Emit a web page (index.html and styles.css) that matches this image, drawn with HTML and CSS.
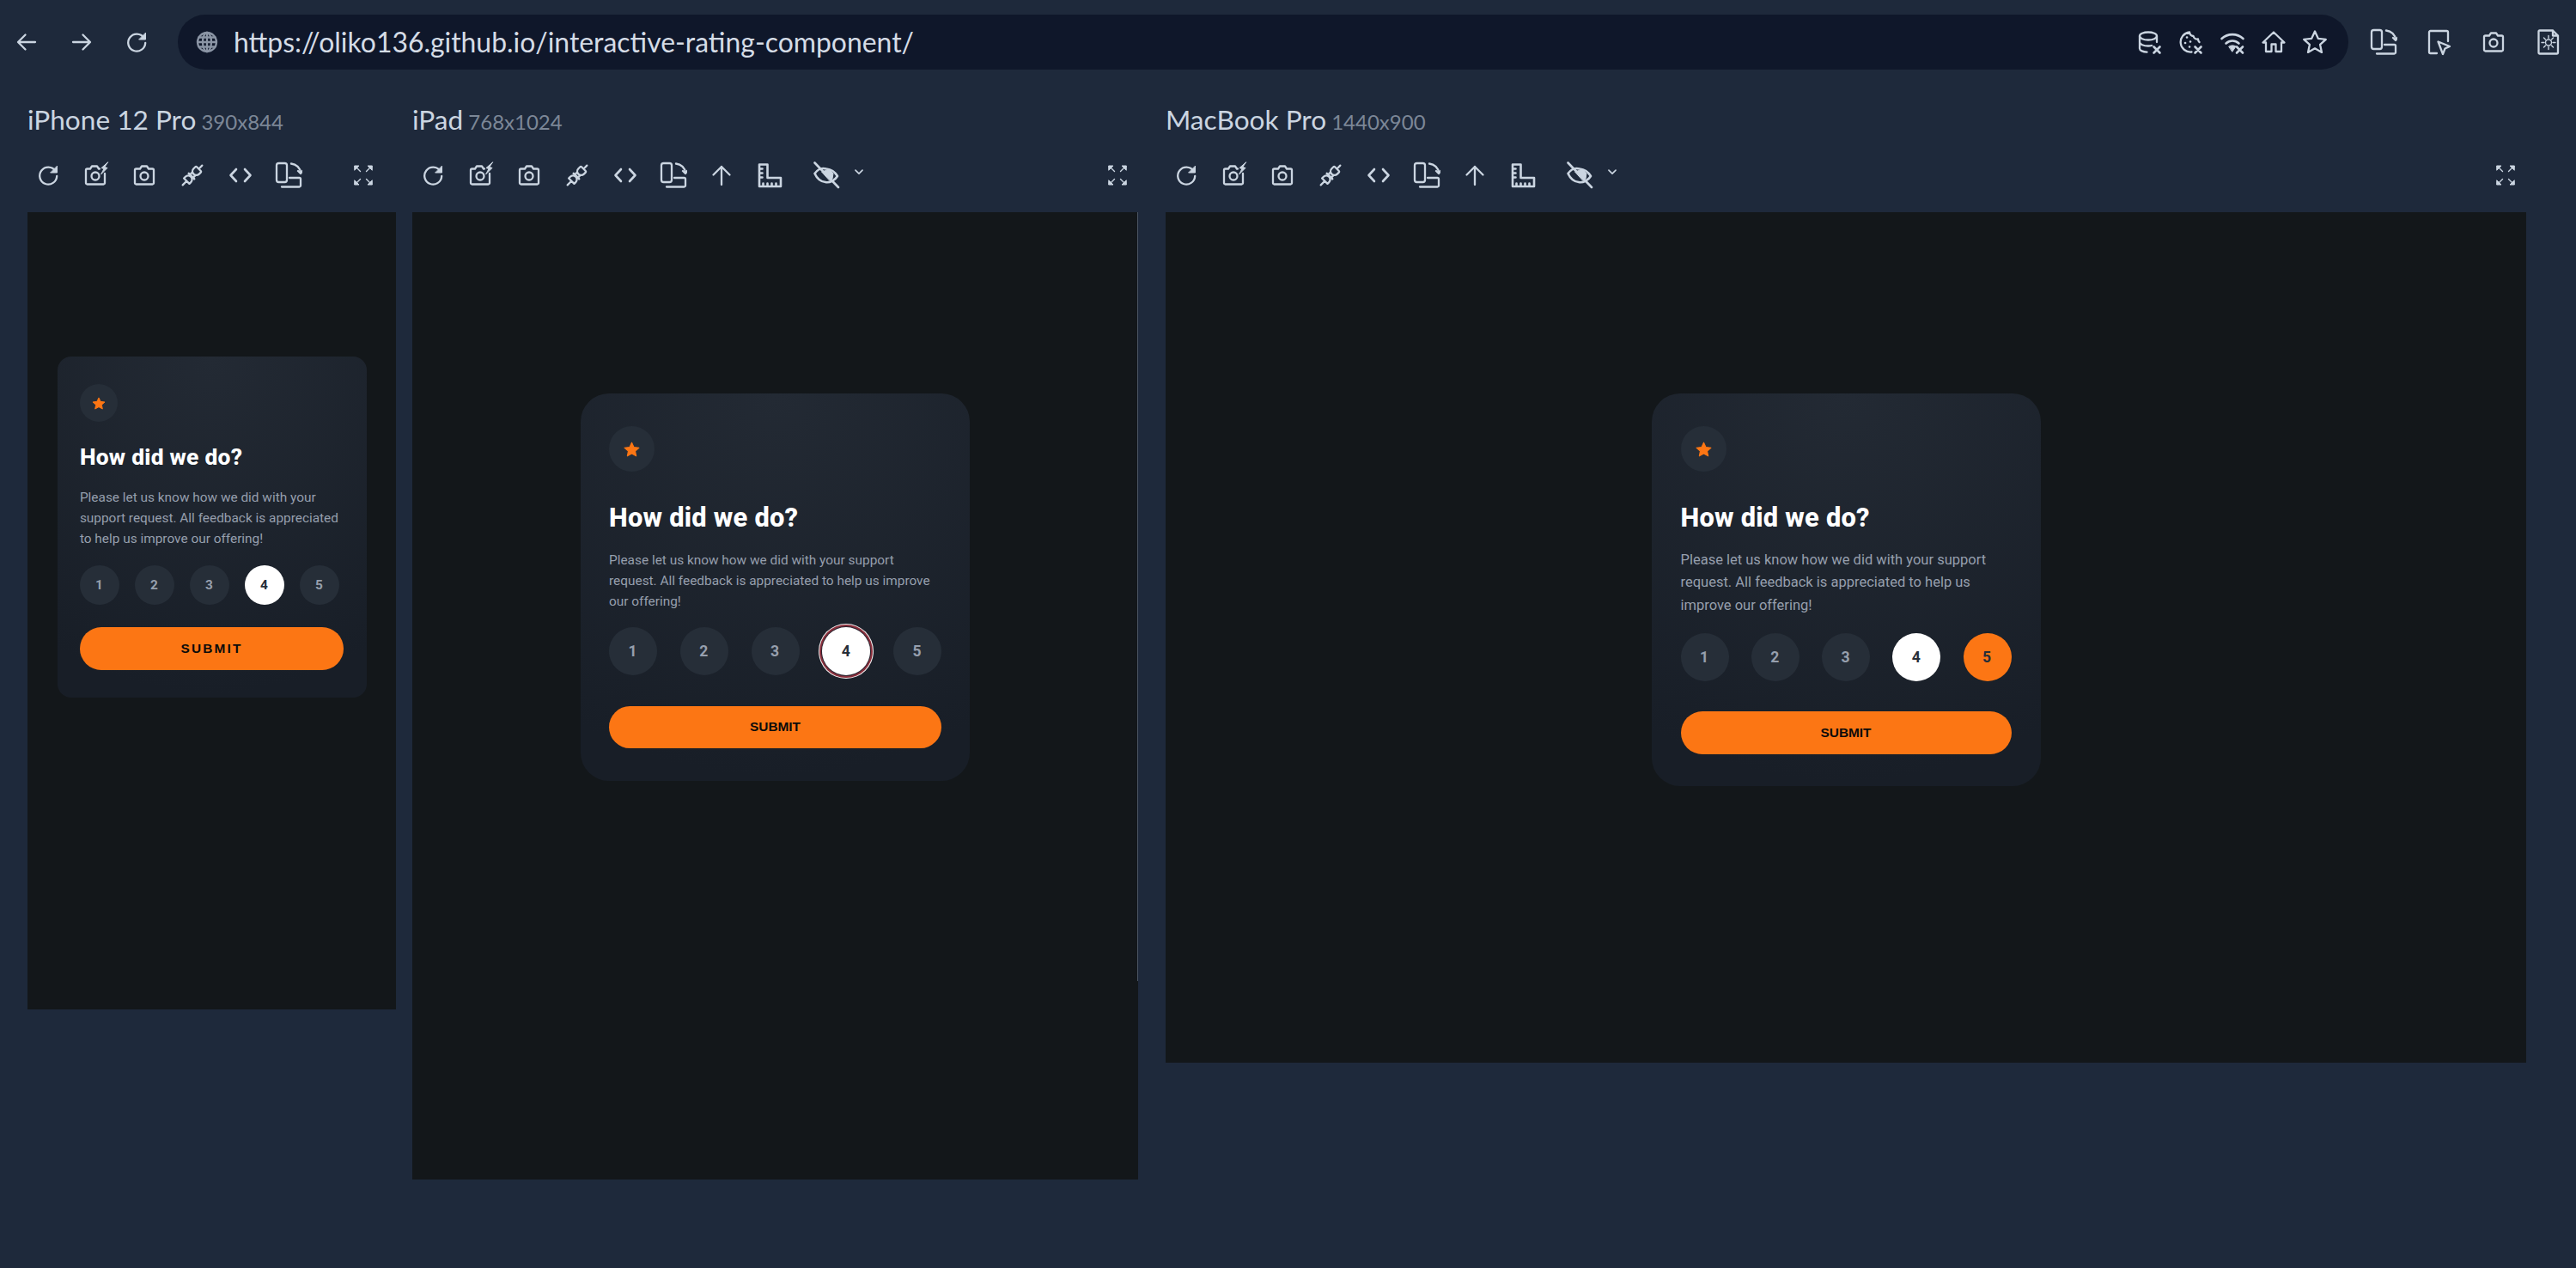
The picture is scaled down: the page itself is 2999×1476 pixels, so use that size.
FILE: index.html
```html
<!DOCTYPE html>
<html lang="en">
<head>
    <meta charset="UTF-8">
    <title>Responsively</title>
    <link rel="stylesheet" href="styles.css">
</head>
<body>
    <svg class="sprite" xmlns="http://www.w3.org/2000/svg">
        <symbol id="i-back" viewBox="0 0 32 32"><path d="M26 16H7M14.5 7.5L6 16l8.500 8.500"/></symbol>
        <symbol id="i-forward" viewBox="0 0 32 32"><path d="M6 16h19M17.500 7.500L26 16l-8.500 8.500"/></symbol>
        <symbol id="i-reload" viewBox="0 0 32 32"><path d="M24.500 11A10 10 0 1 0 26.200 17"/><path class="solid" d="M26.500 5.500v7.500H19z"/></symbol>
        <symbol id="i-globe" viewBox="0 0 32 32"><circle cx="16" cy="16" r="11"/><ellipse cx="16" cy="16" rx="5" ry="11"/><path d="M5 16h22M6.500 10.500h19M6.500 21.500h19M16 5v22"/></symbol>
        <symbol id="i-db" viewBox="0 0 32 32"><ellipse cx="14" cy="9" rx="10" ry="4.500"/><path d="M4 9v14.500c0 2.200 4 4 8.500 4.200M24 9v7M4 16c0 2.500 4.500 4.500 10 4.500 1.500 0 3-.2 4-.5"/><path class="thick" d="M20.500 21.500l7 7M27.500 21.500l-7 7"/></symbol>
        <symbol id="i-cookie" viewBox="0 0 32 32"><path d="M14 4.500A11.500 11.500 0 1 0 16.500 27.500M14 4.500c.5 2.500 2 4.500 4.500 4.500 .5 2.500 3 4 5.500 3.500 0 1.500 .8 3 1.500 3.500"/><path class="thick" d="M11 10.500h.1M9 17h.1M15 15.500h.1M14 21.500h.1M20.500 21.500l7 7M27.500 21.500l-7 7"/></symbol>
        <symbol id="i-wifi" viewBox="0 0 32 32"><path class="thick" d="M3.500 12C10.500 5.500 21.500 5.500 28.500 12M8.500 17.500c4.500-4 10.500-4 15 0"/><path class="solid" d="M12 21c2.500-1.500 5.500-1.500 8 0l-4 6z"/><path class="thick" d="M21 21.500l7 7M28 21.500l-7 7"/></symbol>
        <symbol id="i-home" viewBox="0 0 32 32"><path d="M16 4.500L3.500 16.500H7V27h6.500v-8.500h5V27H25V16.500h3.500z"/></symbol>
        <symbol id="i-star" viewBox="0 0 32 32"><path d="M16 3.500l3.800 8.300 9 1-6.700 6.100 1.900 9-8-4.600-8 4.600 1.900-9-6.700-6.100 9-1z"/></symbol>
        <symbol id="i-rotate" viewBox="0 0 32 32"><rect x="2" y="2" width="12" height="22" rx="2.500"/><path d="M8 29.500h20.500a1.500 1.500 0 0 0 1.500-1.500v-7.500a1.500 1.500 0 0 0-1.500-1.500H17M19 2.500C25 3 29.500 7.500 30 13"/><path d="M27 11l3 3 2-3"/></symbol>
        <symbol id="i-inspect" viewBox="0 0 32 32"><path d="M14 29H6.500A1.500 1.500 0 0 1 5 27.500v-23A1.500 1.500 0 0 1 6.500 3h19A1.500 1.500 0 0 1 27 4.500V15"/><path d="M15.500 15.500l13.500 5.500-5.500 2.500-2.500 6.500z"/></symbol>
        <symbol id="i-camera" viewBox="0 0 32 32"><path d="M6.500 8.500H11l2-3h6l2 3h4.500A1.500 1.500 0 0 1 27 10v15a1.500 1.500 0 0 1-1.500 1.500h-19A1.500 1.500 0 0 1 5 25V10a1.500 1.500 0 0 1 1.500-1.500z"/><circle cx="16" cy="17" r="4.500"/></symbol>
        <symbol id="i-filesun" viewBox="0 0 32 32"><path d="M5.500 2.500H21l6 6v20a1 1 0 0 1-1 1H5.500a1 1 0 0 1-1-1v-25a1 1 0 0 1 1-1zM21 2.500v6h6"/><circle class="fine" cx="16" cy="16.500" r="3.500"/><path class="fine" d="M16 8.500v3M16 21.500v3M8 16.500h3M21 16.500h3M10.500 11l2 2M19.500 20l2 2M21.500 11l-2 2M12.500 20l-2 2"/></symbol>
        <symbol id="i-shot" viewBox="0 0 32 32"><path d="M20 8.500h-1l-2-3h-6l-2 3H5.500A1.500 1.500 0 0 0 4 10v15a1.500 1.500 0 0 0 1.500 1.500h19A1.500 1.500 0 0 0 26 25V14"/><circle cx="15" cy="17" r="4.500"/><path class="solid" d="M29.500 1L22 7.500l3 1-3.500 6.500 7.500-7.500-3-1z"/></symbol>
        <symbol id="i-plug" viewBox="0 0 32 32"><g transform="rotate(45 16 16)"><path d="M16 0v5M13 5.500h6a1.500 1.500 0 0 1 1.500 1.500v2.500a4.500 4.500 0 0 1-9 0V7A1.500 1.500 0 0 1 13 5.500zM13.500 14v3.500M18.500 14v3.500M11.500 23a4.500 4.500 0 0 1 9 0v2.500h-9zM16 25.500v6.500"/><path class="thick" d="M11.500 17.500h9"/></g></symbol>
        <symbol id="i-code" viewBox="0 0 32 32"><path class="thick" d="M11 9l-6.500 7 6.500 7M21 9l6.500 7-6.500 7"/></symbol>
        <symbol id="i-up" viewBox="0 0 32 32"><path d="M16 27V6M6.500 15.500L16 6l9.500 9.500"/></symbol>
        <symbol id="i-ruler" viewBox="0 0 32 32"><path class="thick" d="M4 3.500h9.500V19H29v10H4zM4 8.500h3.500M4 13.500h3.500M4 18.500h3.500M8.500 29v-3.500M13.500 29v-3.500M18.500 29v-3.500M23.500 29v-3.500"/></symbol>
        <symbol id="i-eyeoff" viewBox="0 0 32 32"><path class="thick" d="M2.500 14C6 9 11 7 16 8.500c5 .5 10 3.500 13 8.500-3 5-9 8-14 7-5-.5-10-4.500-12.500-10z"/><path class="solid" d="M11 12l8-3 5 5-1 6-3 2z"/><path class="thick" d="M2.500 1.500L30 30"/></symbol>
        <symbol id="i-chevron" viewBox="0 0 32 32"><path class="thick" d="M9.500 13l6.500 6.500 6.500-6.500"/></symbol>
        <symbol id="i-full" viewBox="0 0 32 32"><path class="solid" d="M6 5h5L6 10zM26 5h-5l5 5zM6 27h5l-5-5zM26 27h-5l5-5z"/><path class="fine" d="M8 7l4.500 4.500M24 7l-4.500 4.500M8 25l4.500-4.500M24 25l-4.500-4.500"/></symbol>
    </svg>

    <div class="topbar">
        <div class="nav">
            <svg class="icon"><use href="#i-back"/></svg>
            <svg class="icon"><use href="#i-forward"/></svg>
            <svg class="icon"><use href="#i-reload"/></svg>
        </div>
        <div class="urlbar">
            <svg class="icon icon-globe"><use href="#i-globe"/></svg>
            <span class="url">https://oliko136.github.io/interactive-rating-component/</span>
            <div class="url-tools">
                <svg class="icon"><use href="#i-db"/></svg>
                <svg class="icon"><use href="#i-cookie"/></svg>
                <svg class="icon"><use href="#i-wifi"/></svg>
                <svg class="icon"><use href="#i-home"/></svg>
                <svg class="icon"><use href="#i-star"/></svg>
            </div>
        </div>
        <div class="app-tools">
            <svg class="icon"><use href="#i-rotate"/></svg>
            <svg class="icon"><use href="#i-inspect"/></svg>
            <svg class="icon"><use href="#i-camera"/></svg>
            <svg class="icon"><use href="#i-filesun"/></svg>
        </div>
    </div>

    <div class="devices">
        <section class="device phone">
            <h2 class="device-name">iPhone 12 Pro <small>390x844</small></h2>
            <div class="toolbar">
                <svg class="icon"><use href="#i-reload"/></svg>
                <svg class="icon"><use href="#i-shot"/></svg>
                <svg class="icon"><use href="#i-camera"/></svg>
                <svg class="icon"><use href="#i-plug"/></svg>
                <svg class="icon"><use href="#i-code"/></svg>
                <svg class="icon"><use href="#i-rotate"/></svg>
                <svg class="icon full"><use href="#i-full"/></svg>
            </div>
            <div class="frame">
                <div class="card">
                    <div class="star-box"><svg class="star" viewBox="0 0 17 16"><path d="M8.500 1l2.200 4.700 5.300.7-3.900 3.500 1 5.100-4.600-2.600-4.600 2.600 1-5.100L1 6.400l5.300-.7z"/></svg></div>
                    <h1 class="title">How did we do?</h1>
                    <p class="text">Please let us know how we did with your support request. All feedback is appreciated to help us improve our offering!</p>
                    <div class="rating">
                        <span class="num">1</span><span class="num">2</span><span class="num">3</span><span class="num on">4</span><span class="num">5</span>
                    </div>
                    <button class="submit">SUBMIT</button>
                </div>
            </div>
        </section>

        <section class="device tablet">
            <h2 class="device-name">iPad <small>768x1024</small></h2>
            <div class="toolbar">
                <svg class="icon"><use href="#i-reload"/></svg>
                <svg class="icon"><use href="#i-shot"/></svg>
                <svg class="icon"><use href="#i-camera"/></svg>
                <svg class="icon"><use href="#i-plug"/></svg>
                <svg class="icon"><use href="#i-code"/></svg>
                <svg class="icon"><use href="#i-rotate"/></svg>
                <svg class="icon"><use href="#i-up"/></svg>
                <svg class="icon"><use href="#i-ruler"/></svg>
                <svg class="icon eye"><use href="#i-eyeoff"/></svg>
                <svg class="icon chevron"><use href="#i-chevron"/></svg>
                <svg class="icon full"><use href="#i-full"/></svg>
            </div>
            <div class="frame">
                <span class="scroll-line"></span>
                <div class="card">
                    <div class="star-box"><svg class="star" viewBox="0 0 17 16"><path d="M8.500 1l2.200 4.700 5.300.7-3.900 3.500 1 5.100-4.600-2.600-4.600 2.600 1-5.100L1 6.400l5.300-.7z"/></svg></div>
                    <h1 class="title">How did we do?</h1>
                    <p class="text">Please let us know how we did with your support request. All feedback is appreciated to help us improve our offering!</p>
                    <div class="rating">
                        <span class="num">1</span><span class="num">2</span><span class="num">3</span><span class="num on focus">4</span><span class="num">5</span>
                    </div>
                    <button class="submit">SUBMIT</button>
                </div>
            </div>
        </section>

        <section class="device laptop">
            <h2 class="device-name">MacBook Pro <small>1440x900</small></h2>
            <div class="toolbar">
                <svg class="icon"><use href="#i-reload"/></svg>
                <svg class="icon"><use href="#i-shot"/></svg>
                <svg class="icon"><use href="#i-camera"/></svg>
                <svg class="icon"><use href="#i-plug"/></svg>
                <svg class="icon"><use href="#i-code"/></svg>
                <svg class="icon"><use href="#i-rotate"/></svg>
                <svg class="icon"><use href="#i-up"/></svg>
                <svg class="icon"><use href="#i-ruler"/></svg>
                <svg class="icon eye"><use href="#i-eyeoff"/></svg>
                <svg class="icon chevron"><use href="#i-chevron"/></svg>
                <svg class="icon full"><use href="#i-full"/></svg>
            </div>
            <div class="frame">
                <div class="card">
                    <div class="star-box"><svg class="star" viewBox="0 0 17 16"><path d="M8.500 1l2.200 4.700 5.300.7-3.900 3.500 1 5.100-4.600-2.600-4.600 2.600 1-5.100L1 6.400l5.300-.7z"/></svg></div>
                    <h1 class="title">How did we do?</h1>
                    <p class="text">Please let us know how we did with your support request. All feedback is appreciated to help us improve our offering!</p>
                    <div class="rating">
                        <span class="num">1</span><span class="num">2</span><span class="num">3</span><span class="num on">4</span><span class="num picked">5</span>
                    </div>
                    <button class="submit">SUBMIT</button>
                </div>
            </div>
        </section>
    </div>
</body>
</html>
```

FILE: styles.css
```css
*{
    margin: 0;
    padding: 0;
    box-sizing: border-box;
}
html,body{
    height: 100%;
}
body{
    background: #1e293b;
    color: #cbd5e1;
    font-family: "Lato", "Liberation Sans", sans-serif;
    overflow: hidden;
}
.sprite{
    display: none;
}
.icon{
    width: 32px;
    height: 32px;
    flex: none;
    fill: none;
    stroke: #cbd5e1;
    stroke-width: 2.3;
    stroke-linejoin: round;
    stroke-linecap: round;
}
symbol .thick{
    stroke-width: 2.6;
}
symbol .fine{
    stroke-width: 1.4;
}
symbol .solid{
    fill: #cbd5e1;
    stroke-width: 1;
}

/* top bar */
.topbar{
    display: flex;
    align-items: center;
    height: 64px;
    margin-top: 17px;
}
.nav{
    display: flex;
    gap: 32px;
    width: 207px;
    padding-left: 15px;
}
.urlbar{
    display: flex;
    align-items: center;
    width: 2527px;
    height: 64px;
    padding-left: 18px;
    padding-right: 23px;
    background: #0f172a;
    border-radius: 32px;
}
.icon-globe{
    stroke: #8b95a5;
}
.url{
    flex: 1;
    margin-left: 15px;
    font-size: 31.900px;
    color: #d5dce6;
}
.url-tools{
    display: flex;
    gap: 16px;
}
.app-tools{
    display: flex;
    gap: 32px;
    padding-left: 25px;
}

/* device columns */
.devices{
    display: flex;
    align-items: flex-start;
    padding-left: 32px;
    margin-top: 38px;
}
.phone{
    width: 429px;
    margin-right: 19px;
}
.tablet{
    width: 845px;
    margin-right: 32px;
}
.laptop{
    width: 1584px;
}
.device-name{
    height: 40px;
    font-size: 31.600px;
    line-height: 40px;
    font-weight: 400;
    white-space: nowrap;
}
.device-name small{
    margin-left: -2px;
    font-size: 24px;
    color: #7c8797;
}
.toolbar{
    display: flex;
    align-items: center;
    gap: 24px;
    height: 48px;
    margin-top: 21px;
    margin-bottom: 19px;
    padding-left: 8px;
}
.toolbar .eye{
    margin-left: 10px;
}
.toolbar .chevron{
    width: 20px;
    height: 20px;
    margin-left: -12px;
    margin-top: -8px;
}
.toolbar .full{
    margin-left: auto;
    margin-right: 8px;
}
.phone .toolbar .full{
    margin-right: 22px;
}

/* emulated viewport */
.frame{
    position: relative;
    display: flex;
    justify-content: center;
    align-items: flex-start;
    background: #13171a;
}
.phone .frame{
    height: 928px;
    padding-top: 168px;
}
.tablet .frame{
    height: 1126px;
    padding-top: 211px;
}
.laptop .frame{
    height: 990px;
    padding-top: 211px;
}
.scroll-line{
    position: absolute;
    top: 0;
    right: 0;
    width: 1px;
    height: 895px;
    background: #4b5563;
}

/* rating card */
.card{
    width: 453px;
    padding: 38px 33px;
    border-radius: 33px;
    background: radial-gradient(98.96% 98.96% at 50% 0%, #232a34 0%, #181e27 100%);
    font-family: "Roboto", "Liberation Sans", sans-serif;
}
.phone .card{
    width: 360px;
    padding: 32px 26.400px;
    border-radius: 16px;
}
.laptop .card{
    padding: 38px 34px 37px;
}
.star-box{
    display: flex;
    align-items: center;
    justify-content: center;
    width: 53px;
    height: 53px;
    border-radius: 50%;
    background: #262e38;
}
.phone .star-box{
    width: 44px;
    height: 44px;
}
.star{
    width: 19px;
    height: 18px;
    fill: #fc7614;
    stroke: #fc7614;
    stroke-linejoin: round;
}
.phone .star{
    width: 16px;
    height: 15px;
}
.title{
    margin-top: 37px;
    font-size: 30.800px;
    line-height: 34px;
    font-weight: 800;
    letter-spacing: .25px;
    color: #fff;
}
.phone .title{
    margin-top: 26px;
    font-size: 26.400px;
    line-height: 30px;
}
.text{
    margin-top: 20px;
    font-size: 15.400px;
    line-height: 24.200px;
    color: #969fad;
}
.phone .text{
    margin-top: 20px;
}
.laptop .text{
    margin-top: 19px;
    font-size: 16.500px;
    line-height: 26.400px;
}
.rating{
    display: flex;
    justify-content: space-between;
    margin-top: 17px;
}
.phone .rating{
    gap: 18px;
    justify-content: flex-start;
    margin-top: 18px;
}
.laptop .rating{
    margin-top: 19px;
}
.num{
    display: flex;
    align-items: center;
    justify-content: center;
    width: 56px;
    height: 56px;
    padding-right: 1px;
    border-radius: 50%;
    background: #262e38;
    color: #969fad;
    font-size: 17.600px;
    font-weight: 700;
}
.phone .num{
    width: 46px;
    height: 46px;
    font-size: 15.400px;
}
.num.on{
    background: #fff;
    color: #262e38;
}
.num.picked{
    background: #fc7614;
    color: #262e38;
}
.num.focus{
    box-shadow: 0 0 0 1px #2a2430, 0 0 0 3px #8a2f3c, 0 0 0 4px #f4f1f1;
}
.submit{
    display: block;
    width: 100%;
    height: 49px;
    margin-top: 36px;
    border: none;
    border-radius: 25px;
    background: #fc7614;
    color: #0b0b0b;
    font-family: "Liberation Sans", sans-serif;
    font-size: 15.400px;
    font-weight: 700;
}
.phone .submit{
    height: 50px;
    margin-top: 26px;
    letter-spacing: 2.160px;
}
.laptop .submit{
    height: 50px;
    margin-top: 35px;
}
```
